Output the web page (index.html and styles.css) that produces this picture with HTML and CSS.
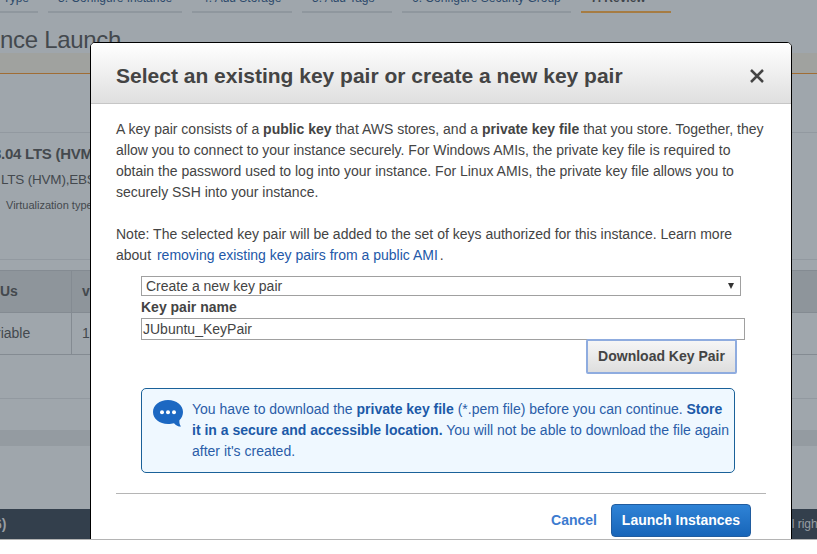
FILE: index.html
```html
<!DOCTYPE html>
<html lang="en">
<head>
<meta charset="utf-8">
<title>Review Instance Launch</title>
<link rel="stylesheet" href="styles.css">
</head>
<body>
<div class="screen">
  <div class="page">
    <nav class="tabs">
      <span class="tab tab-type">Type</span>
      <span class="tab tab-configure">3. Configure Instance</span>
      <span class="tab tab-storage">4. Add Storage</span>
      <span class="tab tab-tags">5. Add Tags</span>
      <span class="tab tab-security">6. Configure Security Group</span>
      <span class="tab tab-review">7. Review</span>
    </nav>
    <h1 class="page-title">nce Launch</h1>
    <div class="warning-strip"></div>
    <div class="spacer"></div>
    <section class="ami">
      <div class="ami-name"><span>8.04 LTS (HVM)</span></div>
      <div class="ami-desc">LTS (HVM),EBS</div>
      <div class="ami-type">Virtualization type:</div>
    </section>
    <div class="table">
      <div class="row head"><div class="cell first">Us</div><div class="cell">v</div></div>
      <div class="row"><div class="cell first"><span class="value">riable</span></div><div class="cell">1</div></div>
    </div>
    <div class="section-line"></div>
    <div class="page-end"></div>
    <footer class="footer"><span>6)</span><span class="rights">All rights</span></footer>
  </div>

  <div class="dialog">
    <header class="dialog-head">
      <h2>Select an existing key pair or create a new key pair</h2>
      <svg class="close" width="14" height="14" viewBox="0 0 14 14"><path d="M1 1 13 13M13 1 1 13" fill="none" stroke="#444" stroke-width="2.5"/></svg>
    </header>
    <div class="dialog-body">
      <p>A key pair consists of a <b>public key</b> that AWS stores, and a <b>private key file</b> that you store. Together, they<br>allow you to connect to your instance securely. For Windows AMIs, the private key file is required to<br>obtain the password used to log into your instance. For Linux AMIs, the private key file allows you to<br>securely SSH into your instance.</p>
      <p>Note: The selected key pair will be added to the set of keys authorized for this instance. Learn more<br>about <a class="link">removing existing key pairs from a public AMI</a> .</p>
      <div class="form">
        <div class="select"><span>Create a new key pair</span><svg width="6" height="6" viewBox="0 0 6 6"><path d="M0 0H6L3 6Z" fill="#333"/></svg></div>
        <div class="label">Key pair name</div>
        <div class="input">JUbuntu_KeyPair</div>
        <div class="download">Download Key Pair</div>
        <div class="info">
          <svg class="bubble" width="30" height="28" viewBox="0 0 30 28"><path d="M15 0C6.5 0 0 5.300 0 12S6.500 24 15 24C17.500 24 19 23.600 21 23.200C23 25.500 25 26.500 28 26.600C26.500 24.500 26.200 22.500 26.400 20.200C28.700 18 30 15.300 30 12C30 5.300 23.500 0 15 0Z" fill="#1c68c2"/><circle cx="9" cy="12.300" r="2" fill="#fff"/><circle cx="15" cy="12.300" r="2" fill="#fff"/><circle cx="21" cy="12.300" r="2" fill="#fff"/></svg>
          <div class="info-text">You have to download the <b>private key file</b> (*.pem file) before you can continue. <b>Store<br>it in a secure and accessible location.</b> You will not be able to download the file again<br>after it's created.</div>
        </div>
      </div>
      <div class="actions"><span class="cancel">Cancel</span><span class="launch">Launch Instances</span></div>
    </div>
  </div>
</div>
</body>
</html>
```
FILE: styles.css
```css
* { box-sizing: border-box; }
body { margin: 0; background: #fff; font: 14px/21px "Liberation Sans", Arial, sans-serif; color: #444; overflow: hidden; }
.screen { position: relative; height: 540px; overflow: hidden; border-bottom: 1px solid #b4b4b4; white-space: nowrap; }
.page { height: 539px; background: #9fa6ac; color: #44494e; overflow: hidden; }

.tabs { display: flex; gap: 10px; height: 13px; }
.tab { flex: none; height: 15px; margin-top: -2px; border-bottom: 2px solid #8f979e; padding-left: 10px; font-size: 12px; line-height: 0; color: #2d4a6b; }
.tab-type { width: 38px; padding-left: 3px; }
.tab-configure { width: 134px; }
.tab-storage { width: 100px; }
.tab-tags { width: 90px; }
.tab-security { width: 169px; }
.tab-review { width: 90px; color: #3f454b; font-weight: bold; border-color: #a67c43; }
.page-title { margin: 0; height: 40px; padding-top: 14px; font-size: 24px; line-height: 26px; font-weight: normal; letter-spacing: -0.3px; }
.warning-strip { height: 21px; background: #a0a29f; border-bottom: 1px solid #a06d35; }
.spacer { height: 59px; border-bottom: 1px solid #9299a0; }
.ami { height: 127px; padding-top: 10px; border-bottom: 1px solid #9299a0; }
.ami-name { height: 25px; line-height: 22px; font-size: 15px; font-weight: bold; letter-spacing: -0.25px; }
.ami-name span { margin-left: -7px; }
.ami-desc { height: 27px; line-height: 23px; font-size: 13.5px; letter-spacing: -0.2px; padding-left: 1px; }
.ami-type { padding-left: 6px; font-size: 11px; line-height: 21px; }
.table { margin-top: 10px; }
.row { display: flex; height: 42px; border-bottom: 1px solid #848b92; line-height: 41px; }
.head { height: 43px; background: #8e959b; border-top: 1px solid #848b92; font-weight: bold; }
.cell { padding-left: 10px; }
.first { width: 72px; padding-left: 0; border-right: 1px solid #848b92; }
.value { margin-left: -4px; }
.section-line { height: 44px; border-bottom: 1px solid #9299a0; }
.page-end { height: 110px; background: linear-gradient(#9fa6ac 31px, #949ba1 31px 47px, #9fa6ac 47px); }
.footer { display: flex; justify-content: space-between; height: 30px; background: #333f4c; color: #989ea3; font-weight: bold; line-height: 30px; }
.footer span:first-child { margin-left: -6px; }
.footer .rights { margin-right: -10px; font-size: 12px; font-weight: normal; }

.dialog { position: absolute; left: 90px; top: 42px; width: 702px; height: 520px; background: #fff; border: 1px solid #000; border-radius: 5px; overflow: hidden; }
.dialog-head { display: flex; justify-content: space-between; align-items: center; height: 61px; padding: 5px 27px 0 25px; background: linear-gradient(#fff, #dfdfdf); border-bottom: 1px solid #c6c6c6; }
.dialog-head h2 { margin: 0; font-size: 21px; line-height: 28px; }
.dialog-body { padding: 15px 25px 0; }
.dialog-body p { margin: 0 0 21px; }
.link { margin: 0 -2px 0 2px; color: #2358a8; }
.form { margin: -11px 25px 0; }
.select { display: flex; justify-content: space-between; align-items: center; width: 600px; height: 20px; padding: 0 6px 0 4px; border: 1px solid #a0a0a0; }
.label { height: 22px; line-height: 22px; font-weight: bold; }
.input { width: 604px; height: 22px; line-height: 20px; padding-left: 1px; border: 1px solid #a0a0a0; }
.download { width: 151px; height: 35px; margin: -1px 0 0 445px; border: 2px solid #8facdf; border-radius: 2px; background: linear-gradient(#f6f6f6, #dedede); text-align: center; line-height: 30px; font-weight: bold; }
.info { display: flex; width: 594px; height: 85px; margin-top: 14px; padding: 10px 0 0 11px; border: 1px solid #1a6199; border-radius: 5px; background: #eff8ff; color: #2a5da8; }
.bubble { flex: none; margin: 1px 9px 0 0; }
.info b { color: #1c5aa8; }
.actions { display: flex; justify-content: flex-end; margin-top: 20px; padding: 10px 15px 0 0; border-top: 1px solid #b5b5b5; font-weight: bold; line-height: 33px; }
.cancel { margin-right: 14px; color: #3c7bcf; }
.launch { width: 140px; height: 33px; border: 1px solid #205c9f; border-radius: 4px; background: linear-gradient(#2f83d6, #1765b9); color: #fff; line-height: 31px; text-align: center; }
```
